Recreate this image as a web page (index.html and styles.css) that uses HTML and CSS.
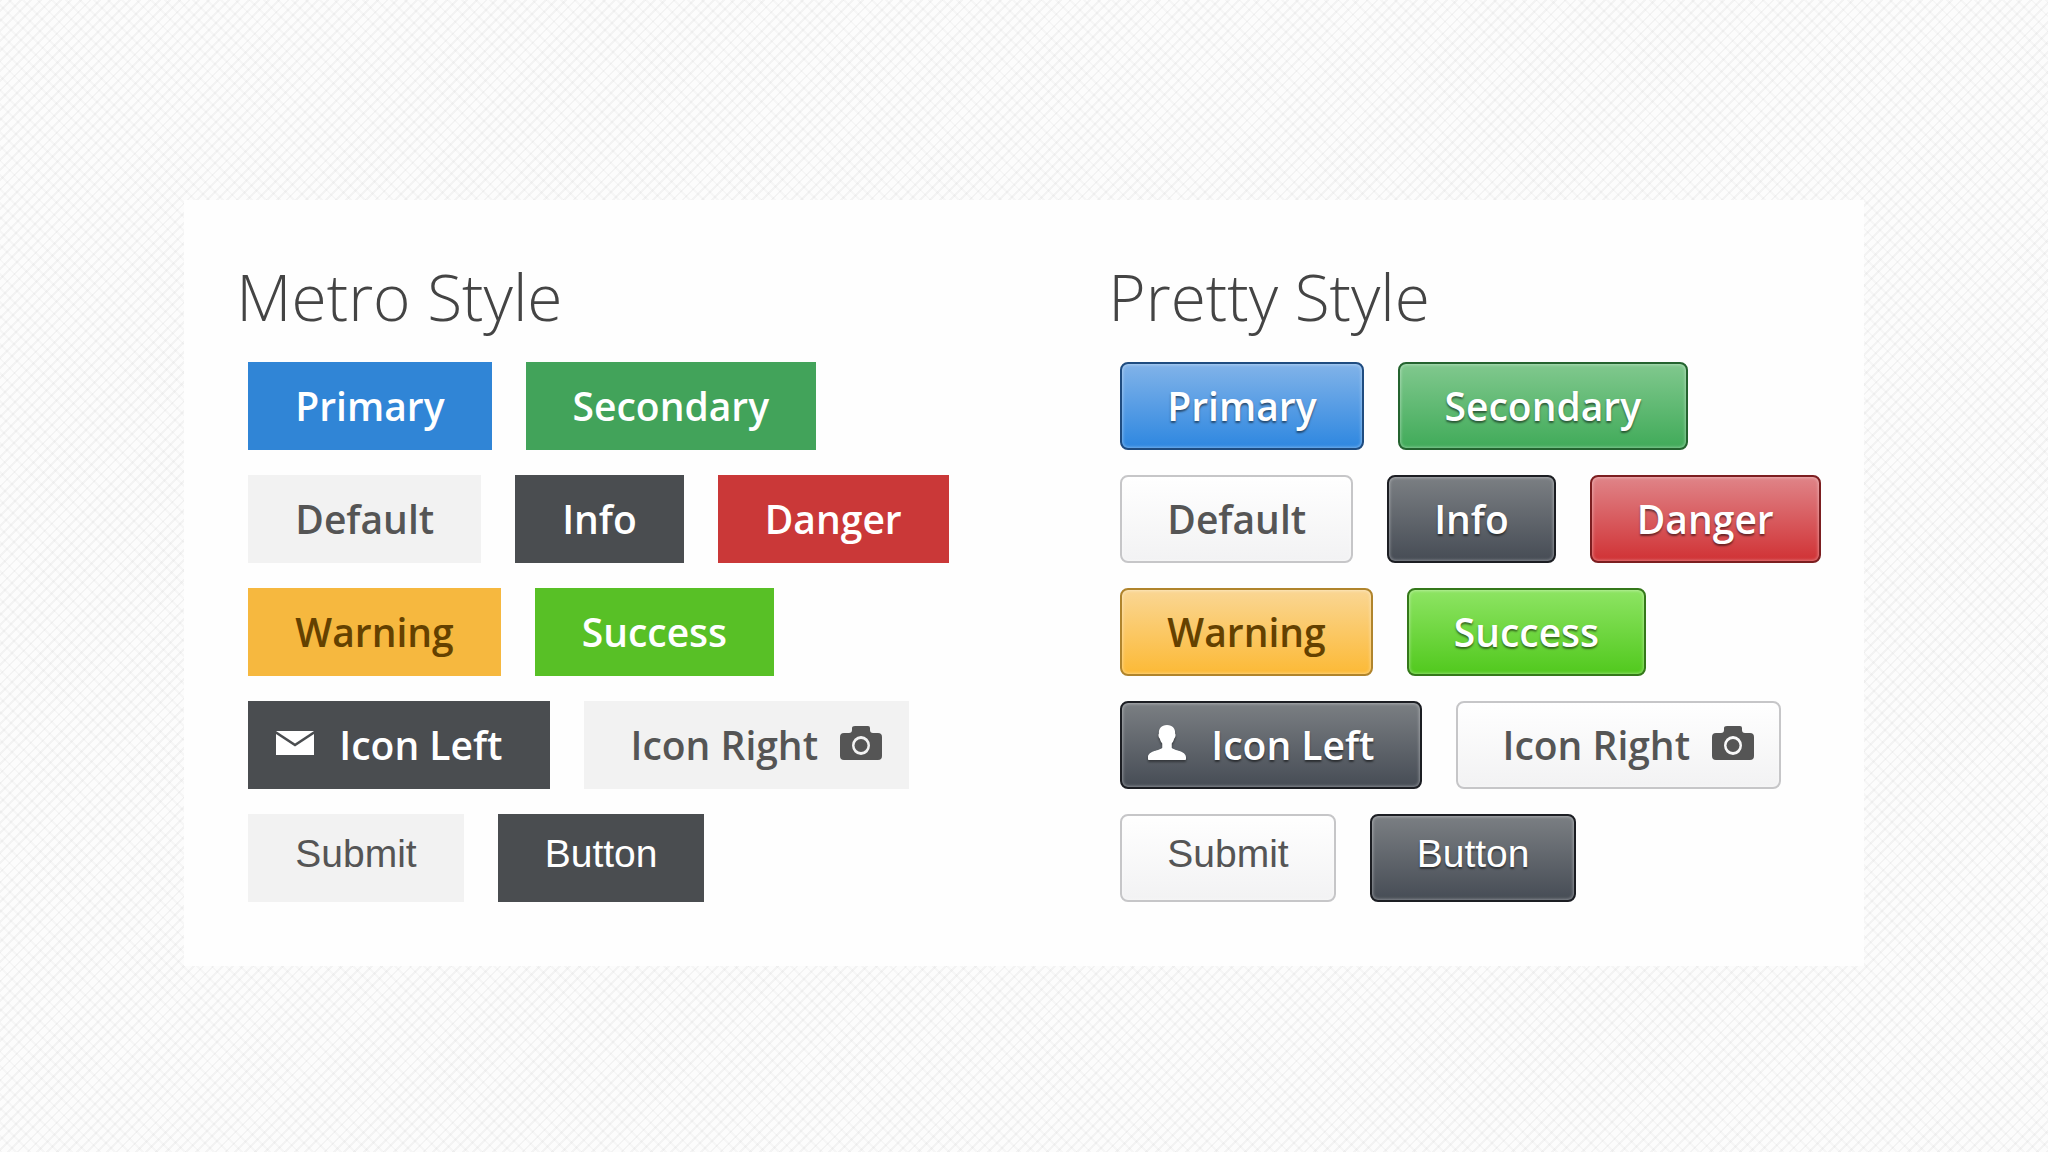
FILE: index.html
```html
<!DOCTYPE html>
<html lang="en">
<head>
    <meta charset="UTF-8">
    <meta name="viewport" content="width=device-width, initial-scale=1.0">
    <title>Button Styles</title>
    <link rel="stylesheet" href="styles.css">
</head>
<body>

    <!-- shared icons -->
    <svg class="sprite" aria-hidden="true">
        <symbol id="mail" viewBox="0 0 38 24">
            <path d="M0 0H38L19 12.5Z"/>
            <path d="M0 3V24H38V3L19 15.5Z"/>
        </symbol>
        <symbol id="user" viewBox="0 0 40 40">
            <path d="M20 1C26 1 29 5 28.500 10C29.500 11 29 14 27.500 15.500C27 18 26 19 25 20.500V25C27 28 40 28 40 35V37Q40 38 38 38H2Q0 38 0 37V35C0 28 13 28 15 25V20.500C14 19 13 18 12.500 15.500C11 14 10.500 11 11.500 10C11 5 14 1 20 1Z"/>
        </symbol>
        <symbol id="camera" viewBox="0 0 42 34">
            <path fill-rule="evenodd" d="M15 0H28Q30 0 30 2V4Q30 7 33 7H38Q42 7 42 11V30Q42 34 38 34H4Q0 34 0 30V11Q0 7 4 7H9Q12 7 12 4V2Q12 0 15 0ZM21 10A9 9.500 0 1 0 21 29A9 9.500 0 1 0 21 10Z"/>
            <circle cx="21" cy="19.500" r="6.500"/>
        </symbol>
    </svg>

    <main class="container">
        <section class="column metro">
            <h2>Metro Style</h2>
            <div class="row">
                <button type="button" class="btn primary">Primary</button>
                <button type="button" class="btn secondary">Secondary</button>
            </div>
            <div class="row">
                <button type="button" class="btn default">Default</button>
                <button type="button" class="btn info">Info</button>
                <button type="button" class="btn danger">Danger</button>
            </div>
            <div class="row">
                <button type="button" class="btn warning">Warning</button>
                <button type="button" class="btn success">Success</button>
            </div>
            <div class="row">
                <button type="button" class="btn info icon-left"><svg class="icon mail"><use href="#mail"/></svg>Icon Left</button>
                <button type="button" class="btn default icon-right">Icon Right<svg class="icon camera"><use href="#camera"/></svg></button>
            </div>
            <div class="row">
                <input type="submit" class="btn native default" value="Submit">
                <input type="button" class="btn native info" value="Button">
            </div>
        </section>

        <section class="column pretty">
            <h2>Pretty Style</h2>
            <div class="row">
                <button type="button" class="btn primary">Primary</button>
                <button type="button" class="btn secondary">Secondary</button>
            </div>
            <div class="row">
                <button type="button" class="btn default">Default</button>
                <button type="button" class="btn info">Info</button>
                <button type="button" class="btn danger">Danger</button>
            </div>
            <div class="row">
                <button type="button" class="btn warning">Warning</button>
                <button type="button" class="btn success">Success</button>
            </div>
            <div class="row">
                <button type="button" class="btn info icon-left"><svg class="icon user"><use href="#user"/></svg>Icon Left</button>
                <button type="button" class="btn default icon-right">Icon Right<svg class="icon camera"><use href="#camera"/></svg></button>
            </div>
            <div class="row">
                <input type="submit" class="btn native default" value="Submit">
                <input type="button" class="btn native info" value="Button">
            </div>
        </section>
    </main>

</body>
</html>
```

FILE: styles.css
```css
* {
    box-sizing: border-box;
}
body {
    font-family: "Open Sans", sans-serif;
    margin: 0;
    padding: 200px 9%;
    background-color: #fcfcfc;
    background-image:
        repeating-linear-gradient(135deg, rgba(0, 0, 0, 0.035) 0 2px, transparent 2px 7px),
        repeating-linear-gradient(45deg, rgba(0, 0, 0, 0.025) 0 2px, transparent 2px 10px);
}
.sprite {
    display: none;
}
.container {
    display: grid;
    grid-template-columns: 872px 1fr;
    padding: 56px 0 64px 52px;
    background-color: #fefefe;
}
h2 {
    margin: 0 0 24px;
    font-size: 64px;
    font-weight: 300;
    line-height: 82px;
    color: #444;
}
.row {
    display: flex;
    gap: 34px;
    margin: 0 0 25px 12px;
}
.row:last-child {
    margin-bottom: 0;
}
.btn {
    display: flex;
    align-items: center;
    height: 88px;
    padding: 0 45px;
    border: 2px solid transparent;
    font-family: "Open Sans", sans-serif;
    font-size: 39px;
    font-weight: 600;
    line-height: 54px;
    color: #fff;
    cursor: pointer;
}
.native {
    font-family: "Liberation Sans", Arial, sans-serif;
    font-weight: 400;
    padding-bottom: 9px;
}
.icon {
    fill: currentColor;
}
.icon-left {
    gap: 25px;
    padding-left: 26px;
}
.icon-right {
    gap: 22px;
    padding-right: 25px;
}
.mail {
    width: 38px;
    height: 24px;
    margin-bottom: 4px;
}
.user {
    width: 38px;
    height: 40px;
    margin-bottom: 4px;
}
.camera {
    width: 42px;
    height: 34px;
    margin-bottom: 4px;
}

/* Metro */
.metro .primary {
    background-color: #3085d6;
}
.metro .secondary {
    background-color: #42a35a;
}
.metro .default {
    background-color: #f2f2f2;
    color: #555;
}
.metro .info {
    background-color: #4a4d50;
}
.metro .danger {
    background-color: #ca3838;
}
.metro .warning {
    background-color: #f6b83f;
    color: #644100;
}
.metro .success {
    background-color: #58c026;
}

/* Pretty */
.pretty .btn {
    border-radius: 8px;
    background-origin: border-box;
    box-shadow: inset 0 0 3px 1px rgba(255, 255, 255, 0.35);
    text-shadow: 0 2px 2px rgba(0, 0, 0, 0.5);
}
.pretty .icon {
    filter: drop-shadow(0 2px 1px rgba(0, 0, 0, 0.4));
}
.pretty .primary {
    background-image: linear-gradient(#83b4e9, #2c86e0);
    border-color: #1f4c80;
}
.pretty .secondary {
    background-image: linear-gradient(#82c98f, #3faa58);
    border-color: #24632f;
}
.pretty .default {
    background-image: linear-gradient(#fff, #f2f2f3);
    border-color: #c6c6c8;
    color: #555;
    text-shadow: none;
}
.pretty .default .icon {
    filter: none;
}
.pretty .info {
    background-image: linear-gradient(#7c8084, #454b54);
    border-color: #1c1e23;
}
.pretty .danger {
    background-image: linear-gradient(#e0868a, #d03033);
    border-color: #7c1e20;
}
.pretty .warning {
    background-image: linear-gradient(#fad796, #fcb934);
    border-color: #b0842c;
    color: #644100;
    text-shadow: none;
}
.pretty .success {
    background-image: linear-gradient(#8fe565, #50c81c);
    border-color: #34781a;
}
```
